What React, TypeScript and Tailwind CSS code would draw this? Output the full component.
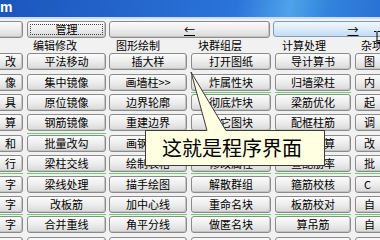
const left0 = ["改", "像", "具", "算", "和", "行", "字", "字", "字", ""];
const left1 = ["平法移动", "集中镜像", "原位镜像", "钢筋镜像", "批量改勾", "梁柱交线", "梁线处理", "改板筋", "合并重线", "分开重线"];

const rightCols = [
  {
    title: "图形绘制",
    w: "w-[78px]",
    green: [5, 7],
    items: ["插大样", "画墙柱>>", "边界轮廓", "重建边界", "画钢筋线", "绘制表格", "描手绘图", "加中心线", "角平分线", "画折断线"],
  },
  {
    title: "块群组层",
    w: "w-[80px]",
    green: [1, 5, 7],
    items: ["打开图纸", "炸属性块", "彻底炸块", "插它图块", "块属性", "修改属性", "解散群组", "重命名块", "做匿名块", "出图名块"],
  },
  {
    title: "计算处理",
    w: "w-[76px]",
    green: [1, 5, 7],
    items: ["导计算书", "归墙梁柱", "梁筋优化", "配框柱筋", "楼板计算", "查配筋率", "箍筋校核", "板筋校对", "算吊筋", "冲切计算"],
  },
];
const col5 = ["图", "内", "起", "调", "改", "批", "C", "自", "自", ""];

const btnBase =
  "h-[17px] flex items-center rounded-[3px] border border-[#8a8b8c] bg-gradient-to-b from-[#fbfbfb] via-[#ededed] to-[#d8d8d8] shadow-[inset_-1px_-1px_0_#c4c4c4] text-[11px] leading-none whitespace-nowrap overflow-hidden";

function Cell({ text, green, align = "center" }: { text: string; green?: boolean; align?: "center" | "end" | "start" }) {
  const pos = align === "end" ? "justify-end pr-[6px]" : align === "start" ? "justify-start pl-[8px]" : "justify-center";
  return (
    <div className="h-[20.4px] flex flex-col">
      <div className={`${btnBase} ${pos}`}>{text}</div>
      <div className="flex-1 flex items-center">
        {green && <div className="h-px w-full bg-[#66d466]" />}
      </div>
    </div>
  );
}

function Column({ items, green, w, align }: { items: string[]; green: number[]; w: string; align?: "center" | "end" | "start" }) {
  return (
    <div className={`${w} flex flex-col`}>
      {items.map((t, i) => (
        <Cell key={i} text={t} green={green.includes(i)} align={align} />
      ))}
    </div>
  );
}

export default function App() {
  return (
    <div className="relative w-[380px] h-[240px] overflow-hidden bg-[#f1f1f1] text-black font-['Noto_Sans_CJK_SC',sans-serif]">
      {/* title bar */}
      <div className="h-[17px] bg-[linear-gradient(100deg,#1b56bd_0%,#2466cc_35%,#2b74da_62%,#4ea3ea_76%,#3184dc_86%,#2a72d6_100%)] flex items-center">
        <span className="text-white font-bold text-[14px] leading-none font-['Liberation_Sans',sans-serif] -mt-[3px]">m</span>
      </div>
      <div className="h-[2px] bg-[#cfdcee]" />

      <div className="flex ml-[-56px] pt-[2px]">
        {/* left block */}
        <div className="flex flex-col">
          <div className="flex gap-[4px] h-[16px]">
            <div className={`${btnBase} w-[79px] h-[16px]`} />
            <div className={`${btnBase} w-[79px] h-[16px] p-[2px]`}>
              <span className="w-full h-full flex items-center justify-center border border-dotted border-[#444] text-[11px]">管理</span>
            </div>
          </div>
          <div className="flex gap-[4px] h-[16.3px] items-center text-[11px] leading-none">
            <div className="w-[79px]" />
            <div className="w-[79px] pl-[6px]">编辑修改</div>
          </div>
          <div className="flex gap-[4px]">
            <Column items={left0} green={[5, 7]} w="w-[79px]" align="end" />
            <Column items={left1} green={[3, 5, 7]} w="w-[79px]" />
          </div>
        </div>

        <div className="ml-[2px] w-px self-stretch bg-[#df6f6f]" />

        {/* right block */}
        <div className="ml-[1px] flex flex-col">
          <div className="flex gap-[3px] h-[16px]">
            <div className={`${btnBase} w-[161px] h-[16px] justify-center`}>
              <span className="underline text-[11px] leading-none">←</span>
            </div>
            <div className="w-[160px] h-[16px] flex items-center justify-center rounded-[3px] border border-[#7f9db9] bg-gradient-to-b from-[#f2f8fd] via-[#dcebf8] to-[#c3dbf1]">
              <span className="underline text-[11px] leading-none">→</span>
            </div>
          </div>
          <div className="flex gap-[4px] h-[16.3px] items-center text-[11px] leading-none whitespace-nowrap">
            {rightCols.map((c) => (
              <div key={c.title} className={`${c.w} pl-[7px]`}>{c.title}</div>
            ))}
            <div className="w-[79px] pl-[6px]">杂项</div>
          </div>
          <div className="flex gap-[4px]">
            {rightCols.map((c) => (
              <Column key={c.title} items={c.items} green={c.green} w={c.w} />
            ))}
            <Column items={col5} green={[5, 7]} w="w-[79px]" align="start" />
          </div>
        </div>
      </div>

      {/* callout */}
      <div className="absolute left-[145px] top-[130px] w-[180px] h-[36px] border border-[#3a3a3a] bg-[#ffffe1] flex items-center pl-[16px] text-[20px] leading-none whitespace-nowrap">
        这就是程序界面
      </div>
      <svg className="absolute left-0 top-0 pointer-events-none" width="380" height="240" viewBox="0 0 380 240">
        <polygon points="191,72 207,131 226,131" fill="#ffffe1" />
        <polyline points="207,130.5 191,72 226,130.5" fill="none" stroke="#3a3a3a" strokeWidth="1" />
      </svg>

      {/* text cursor */}
      <svg className="absolute left-[373px] top-[31px]" width="8" height="13" viewBox="0 0 8 13">
        <path d="M1 0.5h2.5M4.5 0.5h2.5M4 1v11M1 12.5h2.5M4.5 12.5h2.5" stroke="#000" strokeWidth="1" fill="none" />
      </svg>
    </div>
  );
}
